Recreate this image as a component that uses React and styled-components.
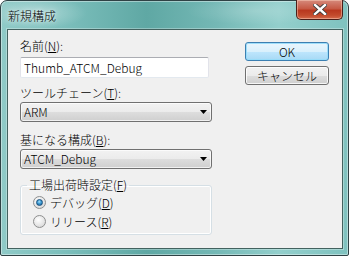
import React from 'react';
import styled, { createGlobalStyle } from 'styled-components';

const GlobalStyle = createGlobalStyle`
	html, body {
		margin: 0;
		padding: 0;
		background: #ffffff;
	}
	body {
		font-family: "Noto Sans CJK JP", "Noto Sans", sans-serif;
		font-size: 12px;
		font-weight: 300;
	}
`;

const Window = styled.div`
	box-sizing: border-box;
	width: 349px;
	height: 256px;
	display: flex;
	flex-direction: column;
	padding: 0 5px 6px 6px;
	border: 1px solid #2f4245;
	border-radius: 7px 7px 2px 2px;
	background:
		radial-gradient(ellipse 50px 16px at 36px 12px, rgba(255, 255, 255, 0.35), transparent),
		radial-gradient(ellipse 70px 14px at 255px 10px, rgba(255, 255, 255, 0.18), transparent),
		linear-gradient(90deg, #8fcac7 0%, #7cbfbc 18%, #5fa8a4 42%, #74b8b5 62%, #93cfcc 80%, #7fc2bf 100%);
	box-shadow: inset 0 0 0 1px rgba(255, 255, 255, 0.4);
`;

const TitleBar = styled.div`
	display: flex;
	justify-content: space-between;
	align-items: flex-start;
	height: 28px;
	padding-left: 1px;
`;

const Title = styled.div`
	margin-top: 7px;
	line-height: 16px;
	font-size: 12px;
	color: #000;
	text-shadow: 0 0 6px rgba(255, 255, 255, 0.8), 0 0 3px rgba(255, 255, 255, 0.6);
`;

const CloseButton = styled.div`
	box-sizing: border-box;
	width: 47px;
	height: 20px;
	margin-top: -1px;
	display: flex;
	align-items: center;
	justify-content: center;
	border: 1px solid #4b1f19;
	border-top: none;
	border-radius: 0 0 5px 5px;
	background: linear-gradient(180deg, #d68a7c 0%, #c65a45 45%, #b9381f 55%, #c24a2c 80%, #d46a4c 100%);
	box-shadow: inset 0 0 0 1px rgba(255, 220, 200, 0.45);
`;

const Client = styled.div`
	flex: 1;
	display: flex;
	justify-content: space-between;
	align-items: flex-start;
	padding: 8px 13px 0 12px;
	background: #f0f0f0;
	border: 1px solid #43625f;
	box-shadow: 0 0 0 1px rgba(255, 255, 255, 0.3);
`;

const Form = styled.div`
	width: 192px;
	display: flex;
	flex-direction: column;
`;

const Label = styled.div`
	line-height: 16px;
	margin-top: ${(p) => p.$top || 0}px;
	color: #000;
	white-space: nowrap;

	u {
		text-decoration: underline;
		text-underline-offset: 1px;
	}
`;

const TextBox = styled.input`
	box-sizing: border-box;
	width: 189px;
	height: 21px;
	margin-top: 3px;
	padding: 0 3px;
	font-family: inherit;
	font-size: 12px;
	font-weight: 300;
	color: #000;
	background: #fff;
	border: 1px solid #e2e3ea;
	border-top-color: #abadb3;
	border-bottom-color: #e3e9ef;
	border-radius: 2px;
	outline: none;
`;

const Combo = styled.div`
	box-sizing: border-box;
	width: 192px;
	height: 20px;
	margin-top: 1px;
	display: flex;
	align-items: center;
	justify-content: space-between;
	padding: 0 4px 0 3px;
	border: 1px solid #707070;
	border-radius: 3px;
	background: linear-gradient(180deg, #f2f2f2 0%, #ebebeb 50%, #dddddd 51%, #cfcfcf 100%);
	box-shadow: inset 0 0 0 1px rgba(255, 255, 255, 0.7);
	color: #000;
	line-height: 16px;
`;

const Group = styled.fieldset`
	box-sizing: border-box;
	margin: 8px 0 0 0;
	padding: 0 0 3px 12px;
	width: 192px;
	border: 1px solid #d5dfe5;
	border-radius: 3px;
	box-shadow: inset 0 0 0 1px #ffffff;

	legend {
		margin-left: -6px;
		padding: 0 2px;
		line-height: 16px;
		color: #000;
	}
`;

const RadioRow = styled.label`
	display: flex;
	align-items: center;
	gap: 4px;
	height: 19px;
	line-height: 16px;
	color: #000;
`;

const RadioDot = styled.span`
	box-sizing: border-box;
	width: 13px;
	height: 13px;
	border-radius: 50%;
	border: 1px solid #8e8f8f;
	display: flex;
	align-items: center;
	justify-content: center;
	background: radial-gradient(circle at 40% 35%, #ffffff 0%, #e8e8e8 50%, #cfcfcf 100%);

	&::after {
		content: '';
		width: 7px;
		height: 7px;
		border-radius: 50%;
		display: ${(p) => (p.$checked ? 'block' : 'none')};
		background: radial-gradient(circle at 45% 35%, #a8e0fb 0%, #3c9ad2 45%, #1b5e93 100%);
		border: 1px solid #174f7d;
		box-sizing: border-box;
	}
`;

const Buttons = styled.div`
	width: 84px;
	margin-top: 4px;
	display: flex;
	flex-direction: column;
	gap: 5px;
`;

const Button = styled.div`
	box-sizing: border-box;
	height: 19px;
	display: flex;
	align-items: center;
	justify-content: center;
	border: 1px solid ${(p) => (p.$default ? '#3c7fb1' : '#707070')};
	border-radius: 3px;
	background: ${(p) =>
		p.$default
			? 'linear-gradient(180deg, #eaf6fd 0%, #d9f0fc 50%, #bee6fd 51%, #a7d9f5 100%)'
			: 'linear-gradient(180deg, #f2f2f2 0%, #ebebeb 50%, #dddddd 51%, #cfcfcf 100%)'};
	box-shadow: inset 0 0 0 1px ${(p) => (p.$default ? 'rgba(150, 220, 250, 0.9)' : 'rgba(255, 255, 255, 0.8)')};
	color: #000;
	line-height: 16px;
`;

function CloseGlyph() {
	return (
		<svg width="14" height="11" viewBox="0 0 14 11">
			<path
				d="M2 1 L12 10 M12 1 L2 10"
				stroke="#3a3a3a"
				strokeWidth="4.2"
				strokeLinecap="square"
			/>
			<path
				d="M2 1 L12 10 M12 1 L2 10"
				stroke="#ffffff"
				strokeWidth="2.4"
				strokeLinecap="square"
			/>
		</svg>
	);
}

function Arrow() {
	return (
		<svg width="7" height="4" viewBox="0 0 7 4">
			<path d="M0 0 H7 L3.5 4 Z" fill="#000" />
		</svg>
	);
}

export default function App() {
	return (
		<>
			<GlobalStyle />
			<Window>
				<TitleBar>
					<Title>新規構成</Title>
					<CloseButton>
						<CloseGlyph />
					</CloseButton>
				</TitleBar>
				<Client>
					<Form>
						<Label>
							名前(<u>N</u>):
						</Label>
						<TextBox defaultValue="Thumb_ATCM_Debug" />
						<Label $top={7}>
							ツールチェーン(<u>T</u>):
						</Label>
						<Combo>
							<span>ARM</span>
							<Arrow />
						</Combo>
						<Label $top={10}>
							基になる構成(<u>B</u>):
						</Label>
						<Combo>
							<span>ATCM_Debug</span>
							<Arrow />
						</Combo>
						<Group>
							<legend>
								工場出荷時設定(<u>F</u>)
							</legend>
							<RadioRow>
								<RadioDot $checked />
								<span>
									デバッグ(<u>D</u>)
								</span>
							</RadioRow>
							<RadioRow>
								<RadioDot />
								<span>
									リリース(<u>R</u>)
								</span>
							</RadioRow>
						</Group>
					</Form>
					<Buttons>
						<Button $default>OK</Button>
						<Button>キャンセル</Button>
					</Buttons>
				</Client>
			</Window>
		</>
	);
}
